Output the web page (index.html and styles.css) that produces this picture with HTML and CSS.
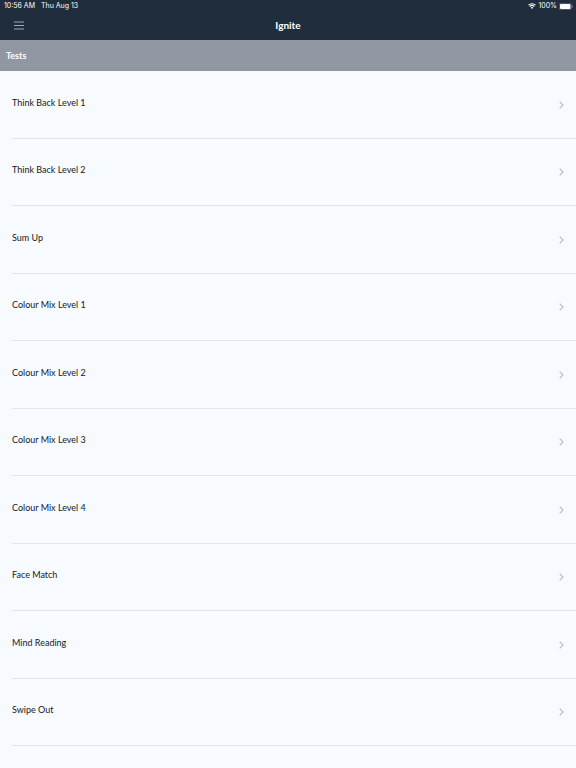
FILE: index.html
```html
<!DOCTYPE html>
<html lang="en">
<head>
  <meta charset="UTF-8" />
  <meta name="viewport" content="width=device-width, initial-scale=1" />
  <title>Ignite</title>
  <link rel="stylesheet" href="styles.css">
</head>
<body>
  <header class="top">
    <div class="status-bar">
      <div class="status-group status-time">
        <span>10:56 AM</span>
        <span>Thu Aug 13</span>
      </div>
      <div class="status-group">
        <svg class="wifi" viewBox="0 0 16 12" aria-hidden="true">
          <path d="M1 4.4a10 10 0 0 1 14 0M3.5 7a6.4 6.4 0 0 1 9 0" fill="none" stroke="currentColor" stroke-width="2.2" />
          <path d="M8 11.8 5.4 9.2a3.7 3.7 0 0 1 5.2 0z" fill="currentColor" />
        </svg>
        <span>100%</span>
        <svg class="battery" viewBox="0 0 28 14" aria-hidden="true">
          <rect x="0.5" y="0.5" width="24" height="13" rx="3.5" fill="none" stroke="currentColor" stroke-opacity="0.5" />
          <rect x="2" y="2" width="21" height="10" rx="2" fill="currentColor" />
          <path d="M26 4.5c2 .8 2 4.2 0 5z" fill="currentColor" fill-opacity="0.6" />
        </svg>
      </div>
    </div>
    <nav class="navbar">
      <button class="menu-btn" type="button" aria-label="Menu">
        <svg viewBox="0 0 10 9" aria-hidden="true">
          <path d="M0 1h10M0 4.5h10M0 8h10" stroke="currentColor" stroke-width="0.8" />
        </svg>
      </button>
      <h1>Ignite</h1>
    </nav>
  </header>

  <main>
    <h2 class="section-title">Tests</h2>
    <ul class="test-list">
      <li><a href="#">Think Back Level 1</a></li>
      <li><a href="#">Think Back Level 2</a></li>
      <li><a href="#">Sum Up</a></li>
      <li><a href="#">Colour Mix Level 1</a></li>
      <li><a href="#">Colour Mix Level 2</a></li>
      <li><a href="#">Colour Mix Level 3</a></li>
      <li><a href="#">Colour Mix Level 4</a></li>
      <li><a href="#">Face Match</a></li>
      <li><a href="#">Mind Reading</a></li>
      <li><a href="#">Swipe Out</a></li>
    </ul>
  </main>

  <script>
    const chevron = `
      <svg class="chevron" viewBox="0 0 5 8" aria-hidden="true">
        <path d="M0.7 0.7 4 4 0.7 7.3" fill="none" stroke="currentColor" stroke-width="1.2" />
      </svg>`;

    document.querySelectorAll(".test-list a").forEach(link => {
      link.innerHTML = `<span>${link.textContent}</span>${chevron}`;
    });
  </script>
</body>
</html>
```
FILE: styles.css
```css
* {
  box-sizing: border-box;
}

body {
  margin: 0;
  font-family: Lato, sans-serif;
  font-size: 9px;
  line-height: 12px;
  color: #15171a;
  background: #f7fbff;
}

.top {
  background: #202d3d;
  color: #fff;
}

.status-bar {
  display: flex;
  justify-content: space-between;
  align-items: center;
  padding: 0 3px 0 4px;
  font-family: Inter, sans-serif;
  font-size: 7px;
}

.status-group {
  display: flex;
  align-items: center;
  gap: 2px;
}

.status-time {
  gap: 6px;
}

.wifi {
  width: 8px;
  height: 6px;
}

.battery {
  width: 14px;
  height: 7px;
}

.navbar {
  display: grid;
  grid-template-columns: 1fr auto 1fr;
  align-items: center;
  height: 28px;
  padding: 0 14px 2px;
}

.navbar h1 {
  margin: 0;
  font-size: 10px;
  font-weight: 700;
}

.menu-btn {
  display: flex;
  justify-self: start;
  padding: 0;
  border: none;
  background: none;
  color: #c3c8ce;
  cursor: pointer;
}

.menu-btn svg {
  width: 10px;
  height: 9px;
}

.section-title {
  display: flex;
  align-items: center;
  height: 31px;
  margin: 0;
  padding: 0 6px;
  background: #9096a2;
  color: #fff;
  font-size: 9px;
  font-weight: 700;
}

.test-list {
  margin: 0;
  padding: 0 0 0 12px;
  list-style: none;
}

.test-list a {
  display: flex;
  justify-content: space-between;
  align-items: center;
  height: 67px;
  padding-right: 12px;
  border-bottom: 1px solid #e1e5ea;
  color: inherit;
  text-decoration: none;
}

.test-list li:nth-child(odd) a {
  height: 68px;
}

.test-list span {
  padding-bottom: 4px;
}

.chevron {
  width: 5px;
  height: 8px;
  color: #b9bdc3;
}
```
